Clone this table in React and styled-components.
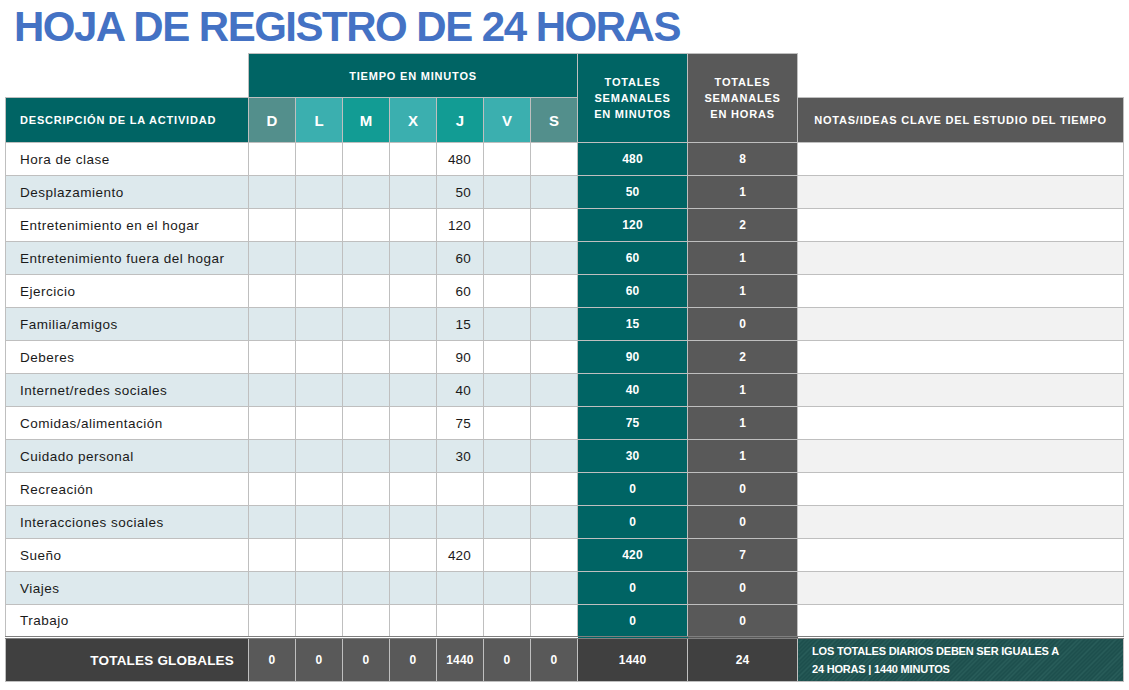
import React from "react";
import styled, { createGlobalStyle } from "styled-components";

const GlobalStyle = createGlobalStyle`
  body {
    margin: 0;
    background: #ffffff;
    font-family: "Liberation Sans", Arial, sans-serif;
  }
`;

const rows = [
  ["Hora de clase", "480", 480, 8],
  ["Desplazamiento", "50", 50, 1],
  ["Entretenimiento en el hogar", "120", 120, 2],
  ["Entretenimiento fuera del hogar", "60", 60, 1],
  ["Ejercicio", "60", 60, 1],
  ["Familia/amigos", "15", 15, 0],
  ["Deberes", "90", 90, 2],
  ["Internet/redes sociales", "40", 40, 1],
  ["Comidas/alimentación", "75", 75, 1],
  ["Cuidado personal", "30", 30, 1],
  ["Recreación", "", 0, 0],
  ["Interacciones sociales", "", 0, 0],
  ["Sueño", "420", 420, 7],
  ["Viajes", "", 0, 0],
  ["Trabajo", "", 0, 0],
];

const days = [
  ["D", "#538f8c"],
  ["L", "#3bafaf"],
  ["M", "#129c94"],
  ["X", "#3bafaf"],
  ["J", "#129c94"],
  ["V", "#3bafaf"],
  ["S", "#538f8c"],
];

const footerDays = ["0", "0", "0", "0", "1440", "0", "0"];

const Page = styled.div`
  padding: 0 6px 0 5px;
`;

const Title = styled.h1`
  margin: 0;
  padding-left: 9px;
  height: 53px;
  line-height: 54px;
  font-size: 42px;
  font-weight: 700;
  color: #4472c4;
  letter-spacing: -1.5px;
`;

const Sheet = styled.table`
  width: 1118px;
  border-collapse: collapse;
  table-layout: fixed;
  font-size: 13.5px;
  letter-spacing: 0.5px;
  color: #1a1a1a;

  td {
    border: 1px solid #bfbfbf;
    padding: 0;
  }
`;

const Blank = styled.td`
  && {
    border: none;
  }
`;

const HeadRow = styled.tr`
  height: ${(p) => p.$h || 44}px;
`;

const HeadCell = styled.td`
  background: ${(p) => p.$bg};
  color: #ffffff;
  font-weight: 700;
  font-size: 11px;
  letter-spacing: 0.8px;
  line-height: 16px;
  text-align: ${(p) => (p.$left ? "left" : "center")};
  padding-left: ${(p) => (p.$left ? "14px" : "0")} !important;
  vertical-align: middle;
`;

const DayHead = styled.td`
  background: ${(p) => p.$bg};
  color: #ffffff;
  font-weight: 700;
  font-size: 15px;
  letter-spacing: 0;
  text-align: center;
`;

const Row = styled.tr`
  height: 33px;
`;

const Desc = styled.td`
  background: ${(p) => (p.$alt ? "#dde9ed" : "#ffffff")};
  padding-left: 14px !important;
  white-space: nowrap;
`;

const Minutes = styled.td`
  background: ${(p) => (p.$alt ? "#dde9ed" : "#ffffff")};
  text-align: right;
  letter-spacing: 0.2px;
  padding-right: 12px !important;
`;

const Total = styled.td`
  background: ${(p) => p.$bg};
  color: #ffffff;
  font-weight: 700;
  font-size: 12px;
  letter-spacing: 0.2px;
  text-align: center;
`;

const Note = styled.td`
  background: ${(p) => (p.$alt ? "#f2f2f2" : "#ffffff")};
`;

const FootRow = styled.tr`
  height: 44px;

  td {
    border-top: 3px double #7f7f7f;
  }
`;

const FootLabel = styled.td`
  background: #404040;
  color: #ffffff;
  font-weight: 700;
  font-size: 13.5px;
  letter-spacing: 0.2px;
  text-align: right;
  padding-right: 14px !important;
`;

const FootNote = styled.td`
  background: repeating-linear-gradient(
    135deg,
    #1d4f4d 0px,
    #1d4f4d 2px,
    #2a5f5c 2px,
    #2a5f5c 3px
  );
  color: #ffffff;
  font-size: 11px;
  font-weight: 700;
  line-height: 18px;
  padding-left: 14px !important;
  letter-spacing: -0.2px;
`;

export default function App() {
  return (
    <Page>
      <GlobalStyle />
      <Title>HOJA DE REGISTRO DE 24 HORAS</Title>
      <Sheet>
        <colgroup>
          <col style={{ width: 243 }} />
          {days.map(([d]) => (
            <col key={d} style={{ width: 47 }} />
          ))}
          <col style={{ width: 110 }} />
          <col style={{ width: 110 }} />
          <col style={{ width: 326 }} />
        </colgroup>
        <tbody>
          <HeadRow>
            <Blank />
            <HeadCell colSpan={7} $bg="#006464">
              TIEMPO EN MINUTOS
            </HeadCell>
            <HeadCell rowSpan={2} $bg="#006464">
              TOTALES
              <br />
              SEMANALES
              <br />
              EN MINUTOS
            </HeadCell>
            <HeadCell rowSpan={2} $bg="#595959">
              TOTALES
              <br />
              SEMANALES
              <br />
              EN HORAS
            </HeadCell>
            <Blank />
          </HeadRow>
          <HeadRow $h={45}>
            <HeadCell $bg="#006464" $left>
              DESCRIPCIÓN DE LA ACTIVIDAD
            </HeadCell>
            {days.map(([d, bg]) => (
              <DayHead key={d} $bg={bg}>
                {d}
              </DayHead>
            ))}
            <HeadCell $bg="#595959">NOTAS/IDEAS CLAVE DEL ESTUDIO DEL TIEMPO</HeadCell>
          </HeadRow>
          {rows.map(([name, j, min, hrs], i) => {
            const alt = i % 2 === 1;
            return (
              <Row key={name}>
                <Desc $alt={alt}>{name}</Desc>
                {days.map(([d]) => (
                  <Minutes key={d} $alt={alt}>
                    {d === "J" ? j : ""}
                  </Minutes>
                ))}
                <Total $bg="#006464">{min}</Total>
                <Total $bg="#595959">{hrs}</Total>
                <Note $alt={alt} />
              </Row>
            );
          })}
          <FootRow>
            <FootLabel>TOTALES GLOBALES</FootLabel>
            {footerDays.map((v, i) => (
              <Total key={i} $bg="#595959">
                {v}
              </Total>
            ))}
            <Total $bg="#404040">1440</Total>
            <Total $bg="#404040">24</Total>
            <FootNote>
              LOS TOTALES DIARIOS DEBEN SER IGUALES A
              <br />
              24 HORAS | 1440 MINUTOS
            </FootNote>
          </FootRow>
        </tbody>
      </Sheet>
    </Page>
  );
}
